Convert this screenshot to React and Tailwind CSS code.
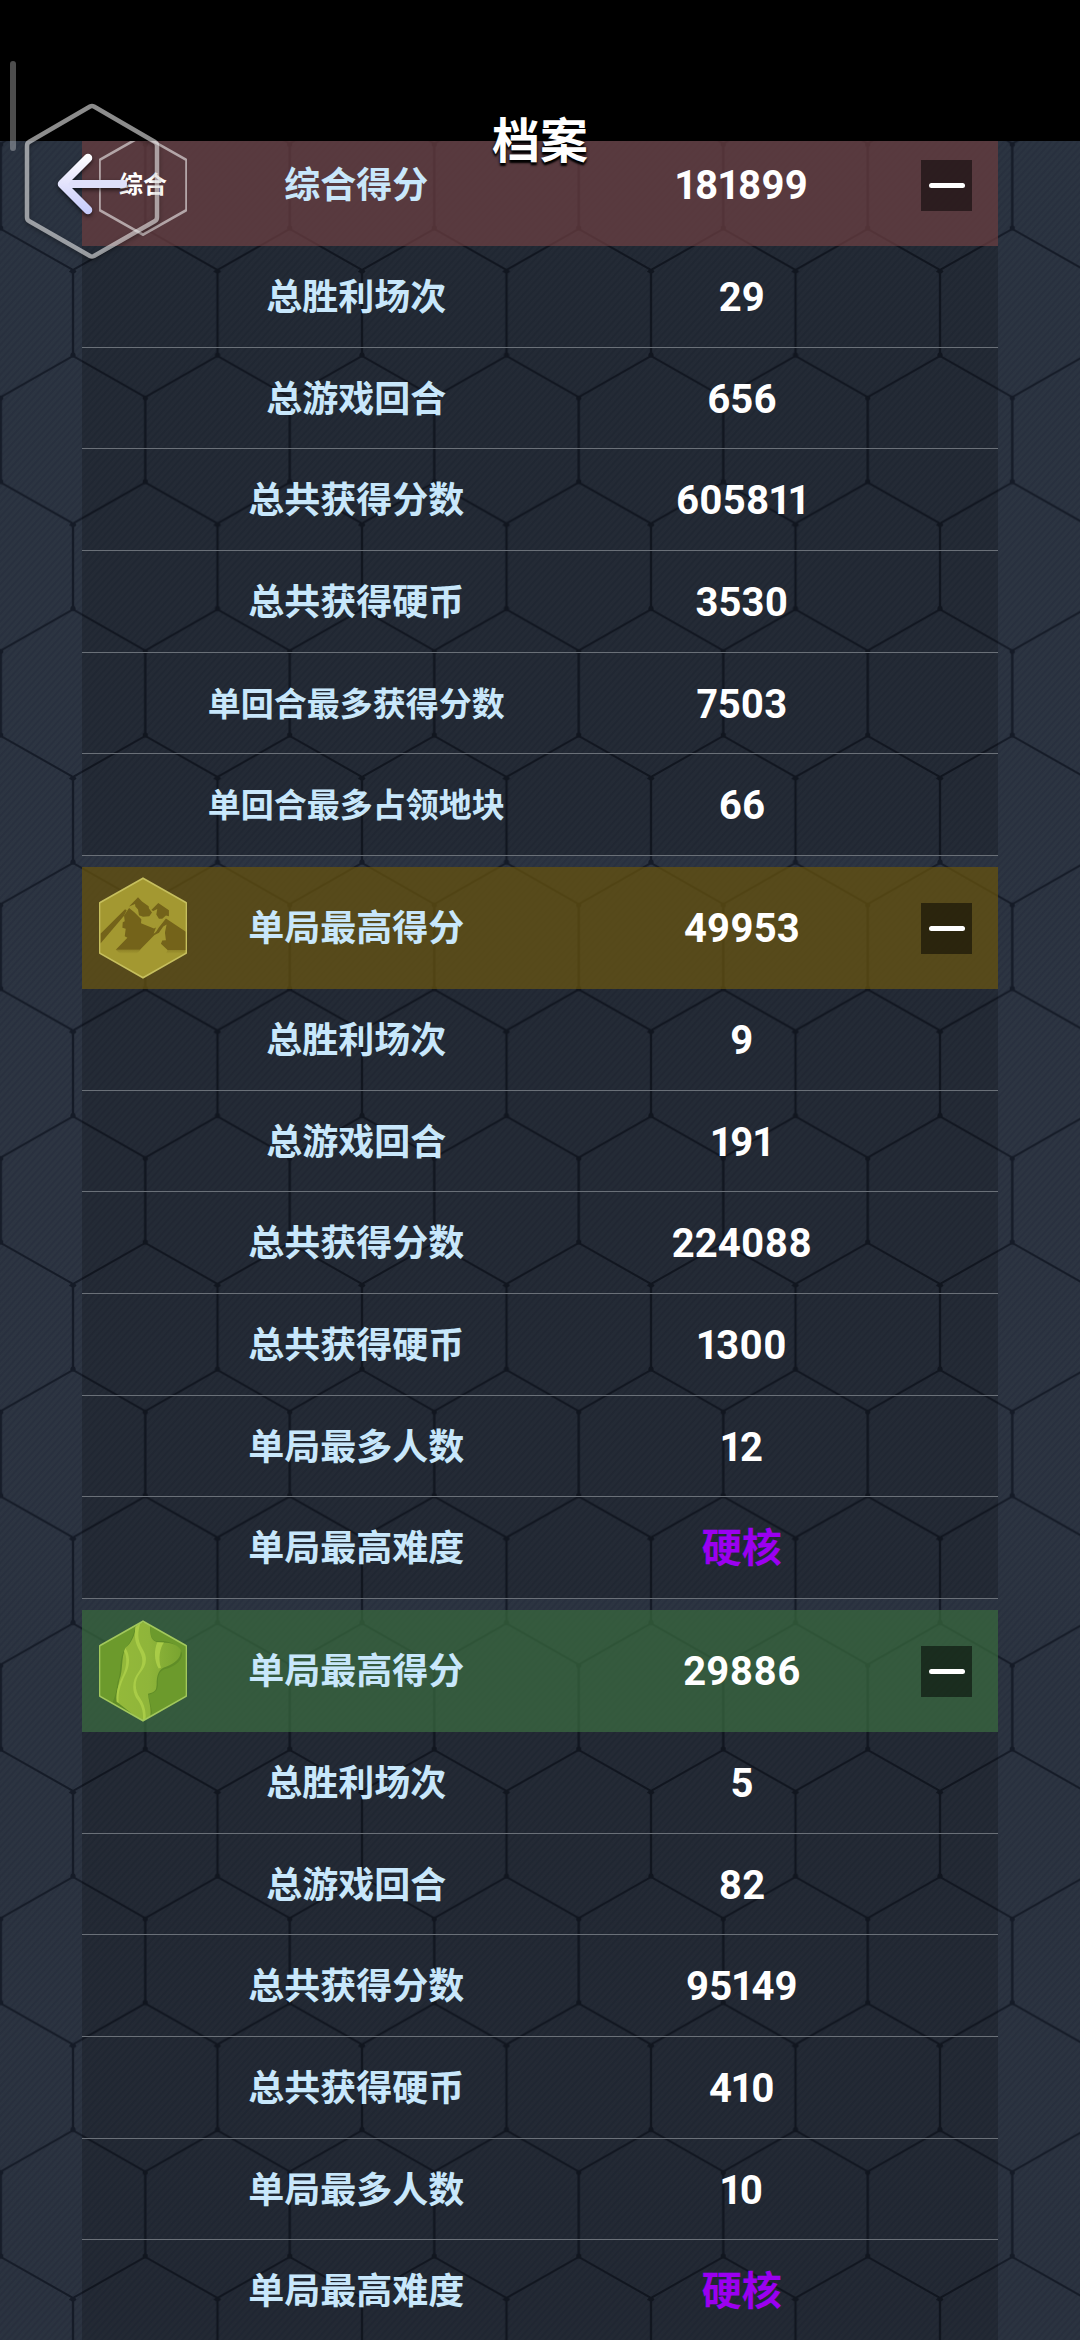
import { useId } from "react";

const FONT = "font-['Roboto','Noto_Sans_CJK_SC',sans-serif]";

const HEX = "M189 54 L318 127 Q320 128 320 131 L320 275 Q320 278 318 280 L189 353 L60 280 Q58 278 58 275 L58 131 Q58 128 60 127 Z";

const sections = [
  {
    id: "overall",
    label: "综合得分",
    value: "181899",
    tone: "bg-[#6c3d3f]/70",
    icon: <OverallIcon />,
    rows: [
      ["总胜利场次", "29"],
      ["总游戏回合", "656"],
      ["总共获得分数", "605811"],
      ["总共获得硬币", "3530"],
      ["单回合最多获得分数", "7503"],
      ["单回合最多占领地块", "66"],
    ],
  },
  {
    id: "mountain",
    label: "单局最高得分",
    value: "49953",
    tone: "bg-[#6a540b]/70",
    icon: <MountainIcon />,
    rows: [
      ["总胜利场次", "9"],
      ["总游戏回合", "191"],
      ["总共获得分数", "224088"],
      ["总共获得硬币", "1300"],
      ["单局最多人数", "12"],
      ["单局最高难度", "硬核"],
    ],
  },
  {
    id: "valley",
    label: "单局最高得分",
    value: "29886",
    tone: "bg-[#396b3d]/70",
    icon: <ValleyIcon />,
    rows: [
      ["总胜利场次", "5"],
      ["总游戏回合", "82"],
      ["总共获得分数", "95149"],
      ["总共获得硬币", "410"],
      ["单局最多人数", "10"],
      ["单局最高难度", "硬核"],
    ],
  },
];

function HexBackground() {
  return (
    <svg className="absolute inset-0 h-full w-full" aria-hidden="true">
      <defs>
        <pattern id="hatch" width="5" height="5" patternUnits="userSpaceOnUse" patternTransform="rotate(-48)">
          <rect width="5" height="2" fill="#1a2230" opacity="0.22" />
        </pattern>
        <linearGradient id="shade" x1="0" y1="0" x2="0" y2="1">
          <stop offset="0" stopColor="#2b3441" />
          <stop offset="0.5" stopColor="#2d3542" />
          <stop offset="1" stopColor="#2b3340" />
        </linearGradient>
        <pattern id="hexes" x="73" y="16.5" width="144.5" height="253.5" patternUnits="userSpaceOnUse">
          <g fill="none" stroke="#151b27">
            <path strokeWidth="2" d="M0 86 L72.25 127 L144.5 86 M0 253.5 L72.25 212.5 L144.5 253.5 M0 0 L4 -2 M0 0 L3 2 M144.5 0 L141 2" />
            <path strokeWidth="2.4" d="M0 0 V86 M144.5 0 V86 M72.25 127 V212.5" />
          </g>
          <g fill="#151b27">
            <circle cx="0" cy="1" r="2.6" />
            <circle cx="144.5" cy="1" r="2.6" />
            <circle cx="0" cy="85" r="2.6" />
            <circle cx="144.5" cy="85" r="2.6" />
            <circle cx="72.25" cy="128" r="2.6" />
            <circle cx="72.25" cy="211.5" r="2.6" />
          </g>
        </pattern>
      </defs>
      <rect width="100%" height="100%" fill="url(#shade)" />
      <rect width="100%" height="100%" fill="url(#hatch)" />
      <rect width="100%" height="100%" fill="url(#hexes)" />
    </svg>
  );
}

function OverallIcon() {
  return (
    <div className="relative mx-auto flex h-[102px] w-[88px] items-center justify-center">
      <svg viewBox="57 50 264 307" className="absolute inset-0 h-full w-full" aria-hidden="true">
        <path d={HEX} fill="none" stroke="#ffffff" strokeOpacity="0.55" strokeWidth="8" />
      </svg>
      <span className="relative text-2xl font-bold text-white">综合</span>
    </div>
  );
}

function MountainIcon() {
  const id = useId();
  return (
    <svg viewBox="57 50 264 307" className="mx-auto block h-[102px] w-[88px]" role="img" aria-label="山地">
      <defs>
        <linearGradient id={id} x1="0" y1="0" x2="0" y2="1">
          <stop offset="0" stopColor="#7a6c1c" stopOpacity="0.5" />
          <stop offset="1" stopColor="#7a6c1c" stopOpacity="0" />
        </linearGradient>
      </defs>
      <path d={HEX} fill="#a39831" />
      <g fill="#74631a">
        <path d="M61 221 L135 147 L140 150 L132 167 L61 250 Z" />
        <path d="M147 143 L163 156 L184 177 L183 189 L207 199 L222 205 L228 202 L221 221 L231 214 L225 223 L180 269 L107 269 L142 233 L134 228 L137 206 L127 203 L128 186 L134 183 L132 166 Z" />
        <path d="M258 175 L318 215 L318 270 L263 270 L243 251 L247 241 L258 240 L255 217 L260 193 L250 199 L237 218 L222 225 L236 203 Z" />
        <path d="M174 111 L147 139 L165 131 L166 139 L174 148 L177 165 L189 170 L208 168 L216 157 L207 145 L206 138 L186 124 Z" />
        <path d="M235 128 L214 149 L220 152 L232 146 L229 163 L237 176 L247 176 L258 166 L267 168 L267 150 Z" />
      </g>
      <path d="M107 269 H182 L170 281 H120 Z M263 270 H316 L312 280 H258 Z" fill={`url(#${id})`} />
      <path d={HEX} fill="none" stroke="#c6bf5e" strokeWidth="5" />
    </svg>
  );
}

function ValleyIcon() {
  const id = useId();
  return (
    <svg viewBox="57 50 264 307" className="mx-auto block h-[102px] w-[88px]" role="img" aria-label="峡谷">
      <defs>
        <linearGradient id={`${id}a`} x1="0" y1="0" x2="1" y2="0">
          <stop offset="0" stopColor="#94b93a" />
          <stop offset="0.5" stopColor="#8fb53a" />
          <stop offset="1" stopColor="#79a430" />
        </linearGradient>
        <clipPath id={`${id}b`}>
          <path d={HEX} />
        </clipPath>
      </defs>
      <g clipPath={`url(#${id}b)`}>
        <path d={HEX} fill="#6c9a2c" />
        <path d="M165 60 C168 85 150 120 136 136 C115 165 126 205 112 238 C110 265 104 285 92 310 L189 358 L216 330 C214 310 208 290 205 275 C232 268 232 258 234 246 C232 218 238 200 262 196 C290 186 308 168 306 150 C290 116 255 112 230 114 C210 108 210 90 215 60 Z" fill="#547f22" opacity="0.5" />
        <path d="M166 58 C170 90 154 120 137 133 C122 165 130 200 118 230 C112 260 108 280 110 296 L189 358 L210 342 C216 320 206 295 204 272 C230 266 228 260 230 245 C230 215 236 196 260 190 C286 180 304 165 303 140 C290 120 268 118 232 117 C212 113 208 92 212 58 Z" fill={`url(#${id}a)`} />
        <g fill="#a9cc47">
          <path d="M166 72 L181 60 C172 90 172 112 188 138 C206 166 197 190 180 210 C162 232 164 262 180 285 C192 303 200 325 196 352 L188 356 C193 320 180 300 168 284 C154 258 158 228 176 206 C192 182 190 160 174 134 C162 110 164 90 166 72 Z" />
          <path d="M136 134 C150 155 150 182 140 205 C126 235 112 262 116 300 L110 296 C106 260 120 235 131 210 C140 188 142 160 132 144 Z" />
          <path d="M232 117 L252 118 C240 135 234 165 243 194 L236 196 C222 172 222 140 232 117 Z" />
        </g>
      </g>
      <path d={HEX} fill="none" stroke="#a2c85c" strokeWidth="5" />
    </svg>
  );
}

function BackButton() {
  return (
    <button type="button" aria-label="返回" className="absolute left-[24px] top-[102px] h-[160px] w-[136px]">
      <svg viewBox="0 0 136 160" className="h-full w-full drop-shadow-[0_2px_2px_rgba(0,0,0,0.6)]" aria-hidden="true">
        <defs>
          <linearGradient id="arrow" gradientUnits="userSpaceOnUse" x1="0" y1="52" x2="0" y2="114">
            <stop offset="0" stopColor="#ffffff" />
            <stop offset="0.5" stopColor="#e2e2fc" />
            <stop offset="1" stopColor="#c3c9fb" />
          </linearGradient>
        </defs>
        <path d="M66 4.500 Q68 3.500 70 4.500 L131 40 Q133 41 133 44 L133 115 Q133 118 131 119 L70 154 Q68 155 66 154 L5 119 Q3 118 3 115 L3 44 Q3 41 5 40 Z" fill="none" stroke="#ffffff" strokeOpacity="0.55" strokeWidth="4.500" />
        <path d="M44 82 H99" fill="none" stroke="#dfe0fa" strokeWidth="8" strokeLinecap="round" />
        <path d="M64 56 L38 82 L64 108" fill="none" stroke="url(#arrow)" strokeWidth="8.500" strokeLinecap="round" strokeLinejoin="round" />
      </svg>
    </button>
  );
}

function Columns() {
  return (
    <colgroup>
      <col className="w-[122px]" />
      <col className="w-[42%]" />
      <col />
      <col className="w-[103px]" />
    </colgroup>
  );
}

function Section({ section }) {
  return (
    <table className="w-full table-fixed border-collapse text-center">
      <Columns />
      <thead className={section.tone}>
        <tr className="h-[122px]">
          <td className="p-0">{section.icon}</td>
          <th scope="col" className="p-0 pr-20 pt-0.5 text-4xl font-bold text-[#c8e7fb]">{section.label}</th>
          <th scope="col" className="p-0 pt-0.5 text-[40px] font-bold proportional-nums text-white">{section.value}</th>
          <td className="p-0">
            <button type="button" aria-label="收起" className="ml-[26px] flex size-[51px] items-center justify-center bg-black/50">
              <span className="h-[5px] w-9 rounded-full bg-white" />
            </button>
          </td>
        </tr>
      </thead>
      <tbody className="bg-black/18">
        {section.rows.map(([label, value]) => (
          <tr key={label} className="h-[102px] nth-[3n+2]:h-[101px] shadow-[inset_0_-1px_0_#6a7078]">
            <td className="p-0" />
            <th
              scope="row"
              className={`whitespace-nowrap p-0 pr-20 pt-0.5 font-bold leading-10 text-[#c8e7fb] ${label.length > 6 ? "text-[33px]" : "text-4xl"}`}
            >
              {label}
            </th>
            <td
              className={`p-0 pt-0.5 text-[40px] font-bold leading-[48px] proportional-nums ${value === "硬核" ? "text-[#9b00f0]" : "text-white"}`}
            >
              {value}
            </td>
            <td className="p-0" />
          </tr>
        ))}
      </tbody>
    </table>
  );
}

export default function App() {
  return (
    <div className={`relative h-screen overflow-hidden bg-[#2a323f] ${FONT}`}>
      <HexBackground />
      <header className="relative z-10 flex h-[141px] justify-center bg-black pt-[118px]">
        <h1 className="h-12 text-5xl font-bold leading-none text-white [text-shadow:0_3px_2px_#000,0_0_3px_#000]">档案</h1>
        <BackButton />
        <div className="absolute left-[10px] top-[61px] h-[90px] w-[6px] rounded-full bg-white/30" />
      </header>
      <main className="relative -mt-[17px] flex flex-col gap-[11px] px-[82px]">
        {sections.map((section) => (
          <Section key={section.id} section={section} />
        ))}
      </main>
    </div>
  );
}
